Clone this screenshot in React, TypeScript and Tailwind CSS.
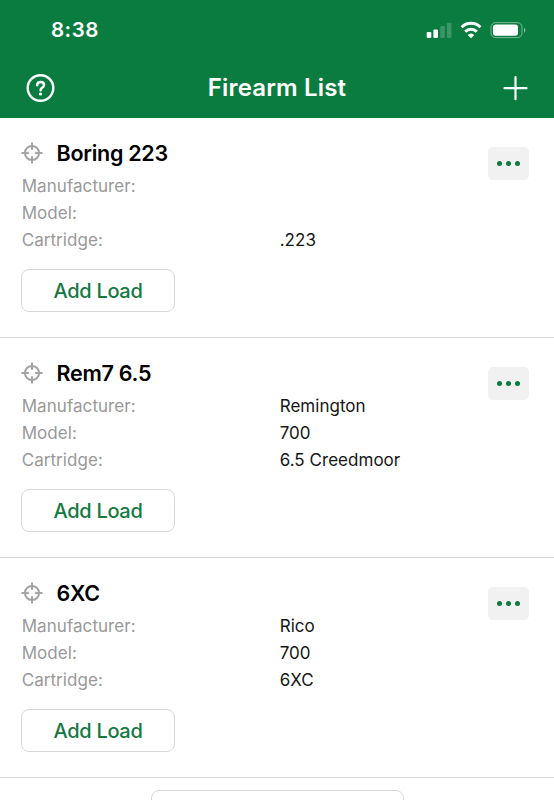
import { Fragment } from 'react';

interface Firearm {
  name: string;
  manufacturer: string;
  model: string;
  cartridge: string;
}

const firearms: Firearm[] = [
  { name: 'Boring 223', manufacturer: '', model: '', cartridge: '.223' },
  { name: 'Rem7 6.5', manufacturer: 'Remington', model: '700', cartridge: '6.5 Creedmoor' },
  { name: '6XC', manufacturer: 'Rico', model: '700', cartridge: '6XC' },
];

function StatusIcons() {
  return (
    <svg width="100" height="20" viewBox="0 0 100 20" fill="#fff" aria-hidden="true">
      <rect x="0.7" y="12" width="4.6" height="6" rx="1.2" />
      <rect x="7.4" y="9.4" width="4.6" height="8.6" rx="1.2" />
      <rect x="14.2" y="6" width="4.6" height="12" rx="1.2" opacity="0.2" />
      <rect x="20.9" y="2.8" width="4.6" height="15.2" rx="1.2" opacity="0.2" />
      <g fill="none" stroke="#fff" strokeWidth="3">
        <path d="M35.6 7.2a13.4 13.4 0 0 1 18.8 0" />
        <path d="M39.2 11.6a8.4 8.4 0 0 1 11.6 0" />
      </g>
      <path d="M45 18.2l-3.3-3.2a4.8 4.8 0 0 1 6.6 0z" />
      <rect x="65" y="2.6" width="31" height="15" rx="4.6" fill="none" stroke="#fff" opacity="0.45" />
      <rect x="67" y="4.5" width="25" height="11.3" rx="2.8" />
      <path d="M98 7.7v5c1.8-.8 1.8-4.2 0-5z" opacity="0.5" />
    </svg>
  );
}

function CrosshairIcon() {
  return (
    <svg width="22" height="22" viewBox="0 0 22 22" fill="none" stroke="#a3a3a3" strokeWidth="2" aria-hidden="true">
      <circle cx="11" cy="11" r="7.1" />
      <path d="M11 .5v7.3M11 14.2v7.3M.5 11h7.3M14.2 11h7.3" />
    </svg>
  );
}

function FirearmCard({ firearm }: { firearm: Firearm }) {
  const rows = [
    { label: 'Manufacturer:', value: firearm.manufacturer },
    { label: 'Model:', value: firearm.model },
    { label: 'Cartridge:', value: firearm.cartridge },
  ];

  return (
    <li className="h-[220px] border-b border-[#d8d8d8] pl-[21px] pr-[25px] pt-[19.5px]">
      <div className="flex h-[35.5px] items-start justify-between">
        <div className="flex h-[30px] items-center">
          <CrosshairIcon />
          <h2 className="ml-[13.5px] text-[21.5px] font-semibold leading-[30px] tracking-[-0.28px] text-black">{firearm.name}</h2>
        </div>
        <button aria-label="More" className="mt-[9.5px] flex h-[32.5px] w-[41px] items-center justify-center gap-[3.7px] rounded-[5px] bg-[#f1f1f1]">
          <span className="size-[5px] rounded-full bg-[#0b7a40]" />
          <span className="size-[5px] rounded-full bg-[#0b7a40]" />
          <span className="size-[5px] rounded-full bg-[#0b7a40]" />
        </button>
      </div>
      <dl className="grid grid-cols-[258px_1fr] pl-[0.7px] text-[17px] leading-[27px]">
        {rows.map((row) => (
          <Fragment key={row.label}>
            <dt className="h-[27px] tracking-[0.06px] text-[#999]">{row.label}</dt>
            <dd className="h-[27px] tracking-[0.03px] text-[#161616]">{row.value}</dd>
          </Fragment>
        ))}
      </dl>
      <button className="mt-[15px] flex h-[43px] w-[154px] items-center justify-center rounded-[8px] border-[1.5px] border-[#d8d8d8] text-[20px] font-medium tracking-[-0.3px] text-[#127a42]">
        Add Load
      </button>
    </li>
  );
}

export default function App() {
  return (
    <div className="h-[800px] w-[554px] overflow-hidden bg-white font-['Inter','Liberation_Sans',sans-serif]">
      <header className="h-[118px] bg-[#0b7c40] text-white">
        <div className="flex h-[60px] items-center justify-between pl-[51px] pr-[28px]">
          <span className="text-[20.5px] font-semibold tracking-[0.5px]">8:38</span>
          <StatusIcons />
        </div>
        <div className="grid h-[56px] grid-cols-[1fr_auto_1fr] items-center px-[26px]">
          <button aria-label="Help" className="w-[29px]">
            <svg width="29" height="29" viewBox="0 0 29 29" fill="none" stroke="#fff">
              <circle cx="14.5" cy="14" r="12.8" strokeWidth="2.4" />
              <path d="M11.2 11.2c.1-2 1.4-3.2 3.4-3.2s3.400 1.100 3.400 2.900c0 1.400-.7 2.100-1.900 2.900-1.100.8-1.500 1.200-1.500 2.300v.2" strokeWidth="2.5" strokeLinecap="round" />
              <circle cx="14.5" cy="20" r="1.6" fill="#fff" stroke="none" />
            </svg>
          </button>
          <h1 className="text-[24px] font-semibold tracking-[0.15px]">Firearm List</h1>
          <button aria-label="Add firearm" className="justify-self-end">
            <svg width="25" height="25" viewBox="0 0 25 25" fill="none" stroke="#fff" strokeWidth="2.2" strokeLinecap="round">
              <path d="M12.5 1.2v22M1.5 12.2h22" />
            </svg>
          </button>
        </div>
      </header>
      <main>
        <ul>
          {firearms.map((firearm) => (
            <FirearmCard key={firearm.name} firearm={firearm} />
          ))}
        </ul>
        <div className="mx-auto mt-[12px] h-[43px] w-[253px] rounded-[8px] border-[1.5px] border-[#d8d8d8]" />
      </main>
    </div>
  );
}
